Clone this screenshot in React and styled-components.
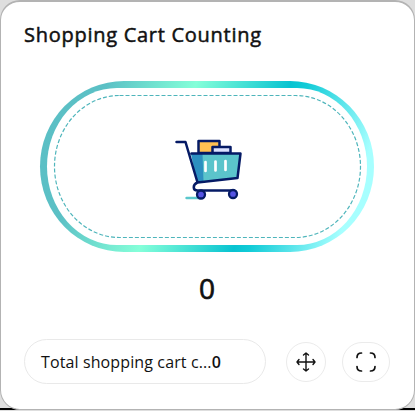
import React from "react";
import styled, { createGlobalStyle } from "styled-components";

const GlobalStyle = createGlobalStyle`
  * { box-sizing: border-box; }
  body {
    margin: 0;
    background: linear-gradient(#dedede 0 408px, #000 408px);
    font-family: "Open Sans", "Noto Sans", sans-serif;
    color: #111;
  }
`;

const Card = styled.main`
  width: 415px;
  height: 410px;
  padding: 19px 24px 25px 23px;
  display: flex;
  flex-direction: column;
  background: #fff;
  border: 1px solid #b3b3b3;
  border-top-width: 2px;
  border-radius: 20px;
`;

const Title = styled.h1`
  margin: 0;
  height: 28px;
  font-size: 20px;
  line-height: 28px;
  font-weight: 400;
  letter-spacing: 0.73px;
  -webkit-text-stroke: 0.5px currentColor;
  white-space: nowrap;
`;

const Ring = styled.div`
  width: 334px;
  height: 171px;
  margin: 32px 0 0 16px;
  padding: 7px;
  flex: none;
  border-radius: 84px / 85.5px;
  background: linear-gradient(
    109deg,
    #5bbfc5 0%,
    #5bc0c5 17%,
    #85ffd9 40%,
    #08c3d1 64%,
    #11cbd7 68%,
    #a7ffff 90%,
    #a7ffff 100%
  );
`;

const RingInner = styled.div`
  height: 157px;
  border-radius: 70px / 78.5px;
  background: #fff;
  overflow: hidden;
`;

const Count = styled.strong`
  height: 40px;
  margin-top: 16px;
  text-align: center;
  font-size: 28px;
  line-height: 40px;
  font-weight: 400;
  -webkit-text-stroke: 0.7px currentColor;
`;

const Footer = styled.footer`
  display: flex;
  align-items: center;
  margin-top: auto;
  height: 45px;
`;

const Summary = styled.div`
  width: 242px;
  height: 45px;
  display: flex;
  align-items: center;
  flex: none;
  padding-left: 16px;
  border: 1px solid #e9e9e9;
  border-radius: 23px;
  font-size: 16px;
  letter-spacing: 0.12px;
  white-space: nowrap;
`;

const SummaryValue = styled.b`
  font-weight: 600;
`;

const IconButton = styled.button`
  width: ${(p) => p.$width}px;
  height: 40px;
  margin-left: ${(p) => p.$gap}px;
  padding: 0;
  display: flex;
  align-items: center;
  justify-content: center;
  flex: none;
  color: #111;
  background: #fff;
  border: 1px solid #ebebeb;
  border-radius: 20px;
`;

const Artwork = styled.svg`
  display: block;
`;

function CartArtwork() {
  return (
    <Artwork width="320" height="157" viewBox="47 88 320 157" fill="none">
      <rect x="54.5" y="95.5" width="306" height="142" rx="65" ry="71" stroke="#4eb5bb" strokeWidth="1.2" strokeDasharray="4 2" />
      <g strokeLinejoin="round" strokeLinecap="round">
        <path d="M186.5 198h14" stroke="#5bc7cc" strokeWidth="2.4" />
        <path d="M198.5 153v-12h21v12z" fill="#ffc052" stroke="#051a65" strokeWidth="2.5" />
        <path d="M212.5 153v-6h18v6z" fill="#dce2ff" stroke="#051a65" strokeWidth="2.5" />
        <path d="M191 153.500h49l-3 25-40 4z" fill="#5bc4cb" />
        <path d="M191 153.500h11.500l1 28-6.500 1z" fill="#2c8fc0" />
        <path d="M176.500 142h9l12 40.500 40-4.500 3-24.500h-49M197.500 182.500c-5 2-5 8 0 8h36.500" stroke="#051a65" strokeWidth="2.5" />
        <path d="M205.500 162v9M215.500 161.500v9M225.500 161v9" stroke="#fff" strokeWidth="2.7" />
        <circle cx="201" cy="194.500" r="4" fill="#5553e3" stroke="#051a65" strokeWidth="2.3" />
        <circle cx="233" cy="194" r="4" fill="#5553e3" stroke="#051a65" strokeWidth="2.3" />
      </g>
    </Artwork>
  );
}

function MoveIcon() {
  return (
    <Artwork width="20" height="20" viewBox="0 0 20 20" fill="none" stroke="currentColor" strokeWidth="1.4" strokeLinecap="round" strokeLinejoin="round">
      <path d="M10 1v18M1 10h18M7.500 3 10 1l2.500 2M7.500 17l2.500 2 2.500-2M3 7.500 1 10l2 2.500M17 7.500l2 2.500-2 2.500" />
    </Artwork>
  );
}

function ExpandIcon() {
  return (
    <Artwork width="20" height="20" viewBox="0 0 20 20" fill="none" stroke="currentColor" strokeWidth="1.7" strokeLinecap="round">
      <path d="M1 5.500Q1 1 5.500 1M14.500 1Q19 1 19 5.500M19 14.500Q19 19 14.500 19M5.500 19Q1 19 1 14.500" />
    </Artwork>
  );
}

export default function App() {
  return (
    <>
      <GlobalStyle />
      <Card>
        <Title>Shopping Cart Counting</Title>
        <Ring>
          <RingInner>
            <CartArtwork />
          </RingInner>
        </Ring>
        <Count>0</Count>
        <Footer>
          <Summary>
            <span>Total shopping cart c...</span>
            <SummaryValue>0</SummaryValue>
          </Summary>
          <IconButton $width={40} $gap={20} aria-label="Move">
            <MoveIcon />
          </IconButton>
          <IconButton $width={48} $gap={16} aria-label="Expand">
            <ExpandIcon />
          </IconButton>
        </Footer>
      </Card>
    </>
  );
}
